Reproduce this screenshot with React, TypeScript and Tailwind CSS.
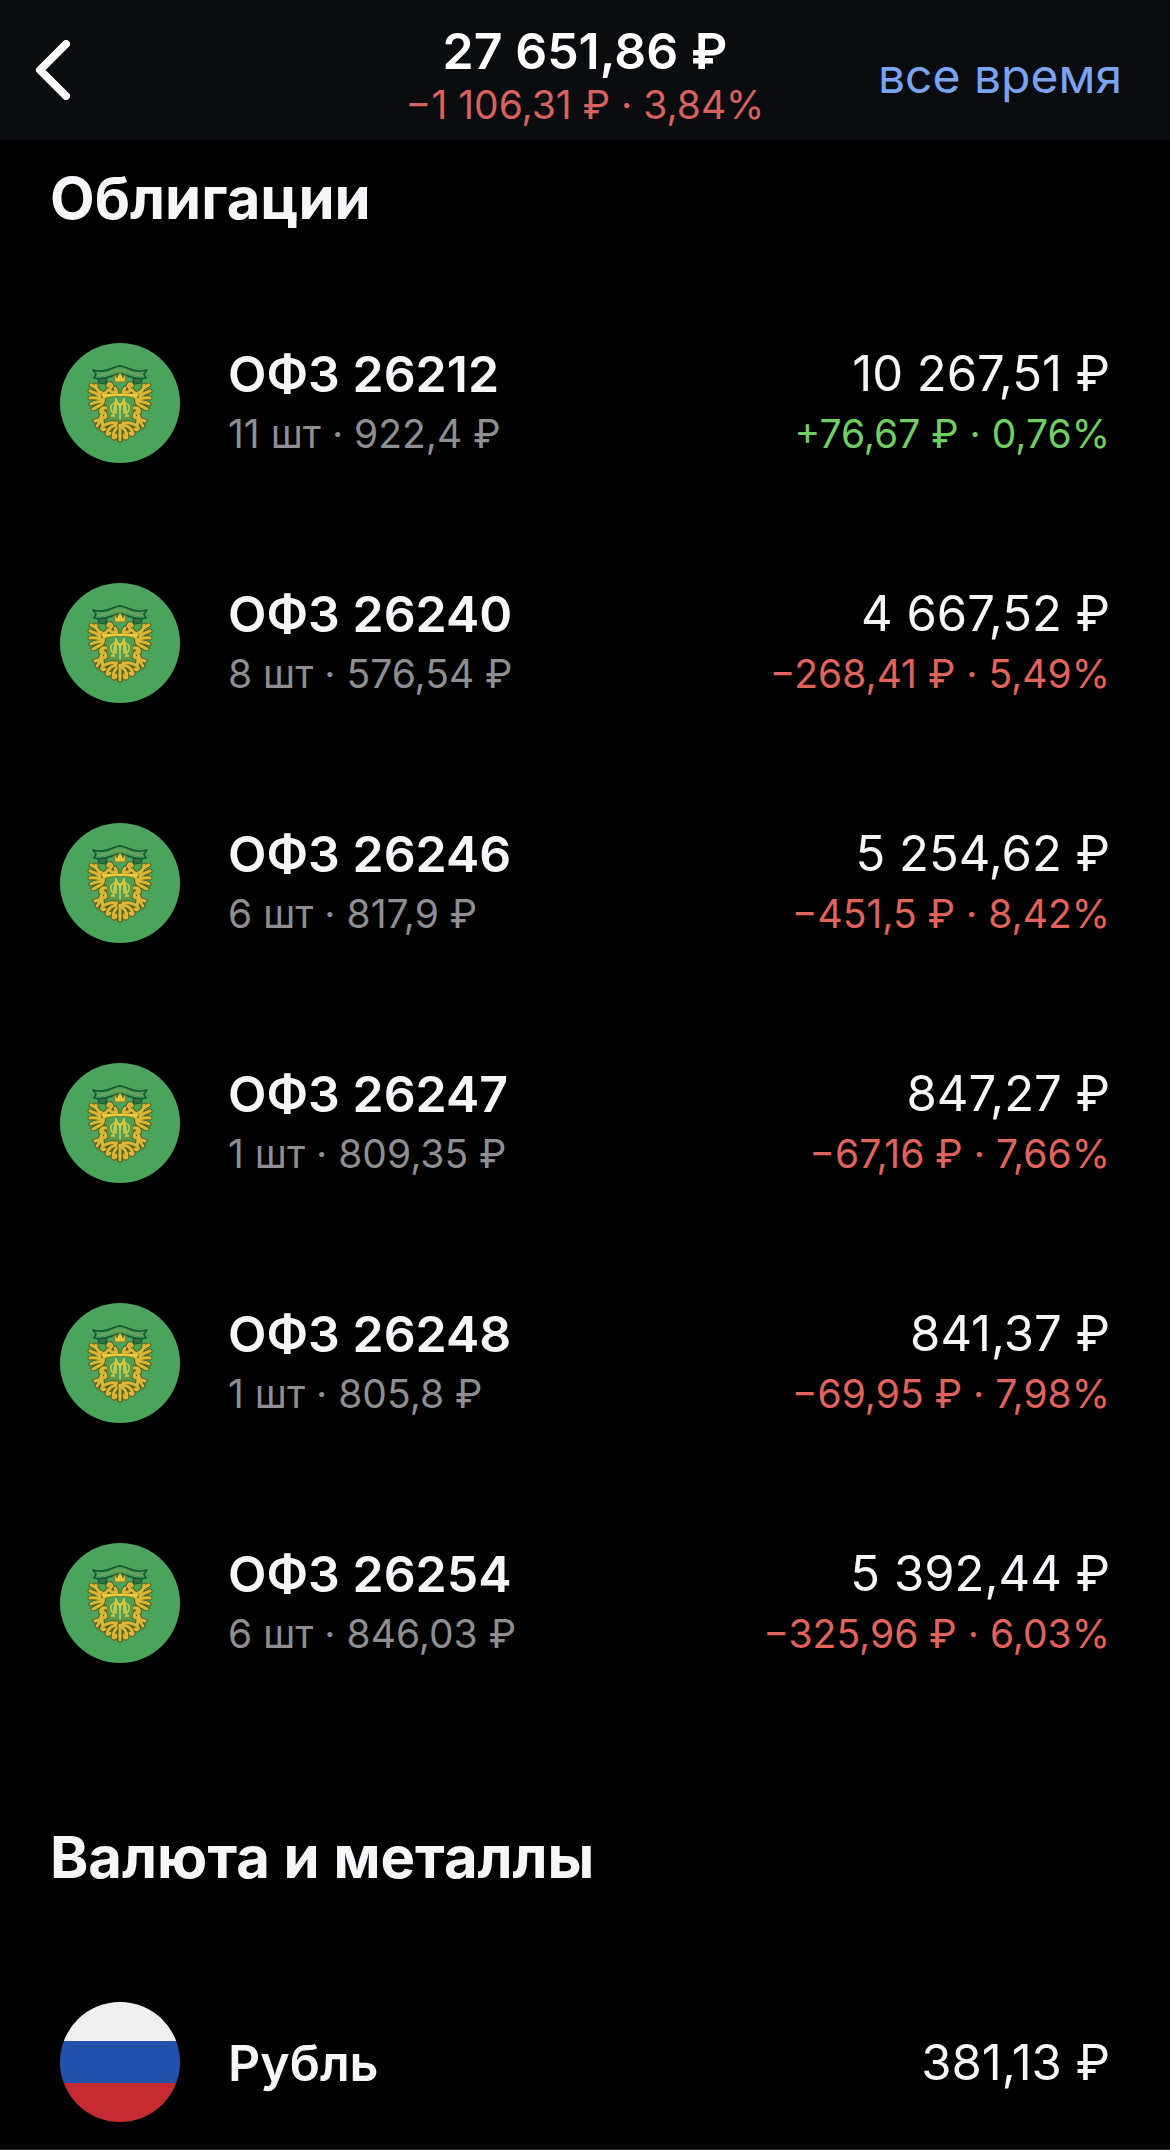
type Trend = 'up' | 'down';

interface Position {
  name: string;
  details: string;
  amount: string;
  change: string;
  trend: Trend;
}

const bonds: Position[] = [
  { name: 'ОФЗ 26212', details: '11 шт · 922,4 ₽', amount: '10 267,51 ₽', change: '+76,67 ₽ · 0,76%', trend: 'up' },
  { name: 'ОФЗ 26240', details: '8 шт · 576,54 ₽', amount: '4 667,52 ₽', change: '−268,41 ₽ · 5,49%', trend: 'down' },
  { name: 'ОФЗ 26246', details: '6 шт · 817,9 ₽', amount: '5 254,62 ₽', change: '−451,5 ₽ · 8,42%', trend: 'down' },
  { name: 'ОФЗ 26247', details: '1 шт · 809,35 ₽', amount: '847,27 ₽', change: '−67,16 ₽ · 7,66%', trend: 'down' },
  { name: 'ОФЗ 26248', details: '1 шт · 805,8 ₽', amount: '841,37 ₽', change: '−69,95 ₽ · 7,98%', trend: 'down' },
  { name: 'ОФЗ 26254', details: '6 шт · 846,03 ₽', amount: '5 392,44 ₽', change: '−325,96 ₽ · 6,03%', trend: 'down' },
];

const trendColor: Record<Trend, string> = {
  up: 'text-[#6fcf62]',
  down: 'text-[#e0635c]',
};

// Wing feathers, head, claws and tail of the left side
const plumage = [
  'M40 50 C37 45 34 43 31 42',
  'M40 53 C36 50 33 49 30 48',
  'M41 56 C37 55 33 54 30 55',
  'M42 58 C38 59 34 59 31 61',
  'M43 60 C40 63 37 64 33 66',
  'M36 42 C36 47 39 50 46 51',
  'M47 52 L44 55 L43 59',
  'M56 49 C50 50 48 47 52 43',
  'M52 43 C51 39 47 41 48 43',
  'M48 47 L46 49 M55 45 L57 49',
  'M46 65 C41 64 39 68 42 71',
  'M43 68 L40 76 L46 74 L45 70',
  'M41 76 L35 78 M41 77 L37 83 M42 77 L43 83',
  'M57 80 C51 79 45 81 42 84 C41 86 43 88 45 86',
  'M58 82 C52 82 48 86 47 90 C47 92 49 92 50 90',
  'M59 83 C55 86 53 90 53 94 C54 96 56 95 56 92',
  'M60 82 L60 97',
].join(' ');

function EagleHalf() {
  return (
    <g fill="none" strokeLinecap="round" strokeLinejoin="round">
      <path d={plumage} stroke="#4f5f20" strokeWidth="5" />
      <path d={plumage} stroke="#deb637" strokeWidth="3" />
      <path d="M38 36 L39 40 L46 41 L47 36" fill="#2a7541" stroke="#15562f" strokeWidth="1.2" />
      <path
        d="M60 23 C53 24 48 28 41 28 C38 28 36 28 33 27 L36 31 L34 35 C40 36 44 36 49 34 C54 32 56 31 60 31"
        fill="#4a9e5b"
        stroke="#15562f"
        strokeWidth="1.6"
      />
      <path d="M38 32 C46 32 52 28 60 27" stroke="#a8b04c" strokeWidth="1.6" strokeDasharray="1 1.2" strokeLinecap="butt" />
    </g>
  );
}

function Emblem() {
  return (
    <svg viewBox="0 0 120 120" className="size-30 shrink-0" aria-hidden="true">
      <circle cx="60" cy="60" r="60" fill="#4aa45b" />
      <EagleHalf />
      <g transform="translate(120 0) scale(-1 1)">
        <EagleHalf />
      </g>
      <path d="M54 31 L57 35 L60 29 L63 35 L66 31 L65 39 H55 Z" fill="#f0c93d" stroke="#7a6a1c" strokeWidth="0.8" />
      <path d="M48 53 H72 V73 C71 75 65 75 60 78 C55 75 49 75 48 73 Z" fill="#4aa45b" stroke="#7c8b2d" strokeWidth="1.4" />
      <path d="M42 52 C48 54 54 50 60 52 C66 50 72 54 78 52" stroke="#f0c93d" strokeWidth="2.4" fill="none" />
      <g stroke="#dfc840" strokeWidth="1.5" fill="none">
        <path d="M53 73 L56 56 L60 64 L64 56 L67 73" />
        <path d="M55 61 H65 M60 61 V76 M51 73 H55 M65 73 H69" />
        <path d="M56 60 C49 60 49 70 56 70 Z M64 60 C71 60 71 70 64 70 Z" />
      </g>
    </svg>
  );
}

function RussianFlag() {
  return (
    <div className="flex size-30 shrink-0 flex-col overflow-hidden rounded-full" aria-hidden="true">
      <div className="h-[39px] bg-[#f0f0f0]" />
      <div className="h-[42px] bg-[#2351ac]" />
      <div className="h-[39px] bg-[#c62b31]" />
    </div>
  );
}

function BondRow({ position }: { position: Position }) {
  return (
    <li className="flex h-60 items-center gap-12 px-15">
      <Emblem />
      <div className="flex-1 pt-[2px]">
        <p className="text-[50px] leading-[60px] font-semibold">{position.name}</p>
        <p className="text-[39px] leading-[60px] text-[#8e8e93]">{position.details}</p>
      </div>
      <div className="pt-[2px] text-right">
        <p className="text-[49px] leading-[60px]">{position.amount}</p>
        <p className={`text-[39px] leading-[60px] ${trendColor[position.trend]}`}>{position.change}</p>
      </div>
    </li>
  );
}

export default function App() {
  return (
    <div className="min-h-screen bg-black font-[Inter,sans-serif] text-[#f6f6f8]">
      <header className="grid h-[140px] grid-cols-[1fr_auto_1fr] items-center bg-[#0b0c10] px-12">
        <button type="button" aria-label="Назад" className="-ml-4 justify-self-start">
          <svg width="38" height="60" viewBox="0 0 38 60" fill="none" stroke="#fff" strokeWidth="8" strokeLinecap="round" strokeLinejoin="round">
            <path d="M34 4 L8 30 L34 56" />
          </svg>
        </button>
        <div className="pt-3.5 text-center">
          <p className="text-[50px] leading-[56px] font-semibold text-white">27 651,86 ₽</p>
          <p className="text-[39px] leading-[52px] text-[#d9625d]">−1 106,31 ₽ · 3,84%</p>
        </div>
        <button type="button" className="justify-self-end pt-3 text-[48px] leading-[60px] text-[#7ba3f0]">
          все время
        </button>
      </header>

      <main>
        <section>
          <h2 className="px-[50px] pt-[22px] pb-[49px] text-[58px] leading-[72px] font-bold">Облигации</h2>
          <ul>
            {bonds.map((bond) => (
              <BondRow key={bond.name} position={bond} />
            ))}
          </ul>
        </section>

        <section className="border-b border-[#2c2c2e]">
          <h2 className="px-[50px] pt-[98px] pb-[49px] text-[58px] leading-[72px] font-bold">Валюта и металлы</h2>
          <div className="flex items-center gap-12 px-15 pt-15 pb-[27px]">
            <RussianFlag />
            <p className="flex-1 pt-[2px] text-[50px] leading-[60px] font-semibold">Рубль</p>
            <p className="pt-[2px] text-[49px] leading-[60px]">381,13 ₽</p>
          </div>
        </section>
      </main>
    </div>
  );
}
